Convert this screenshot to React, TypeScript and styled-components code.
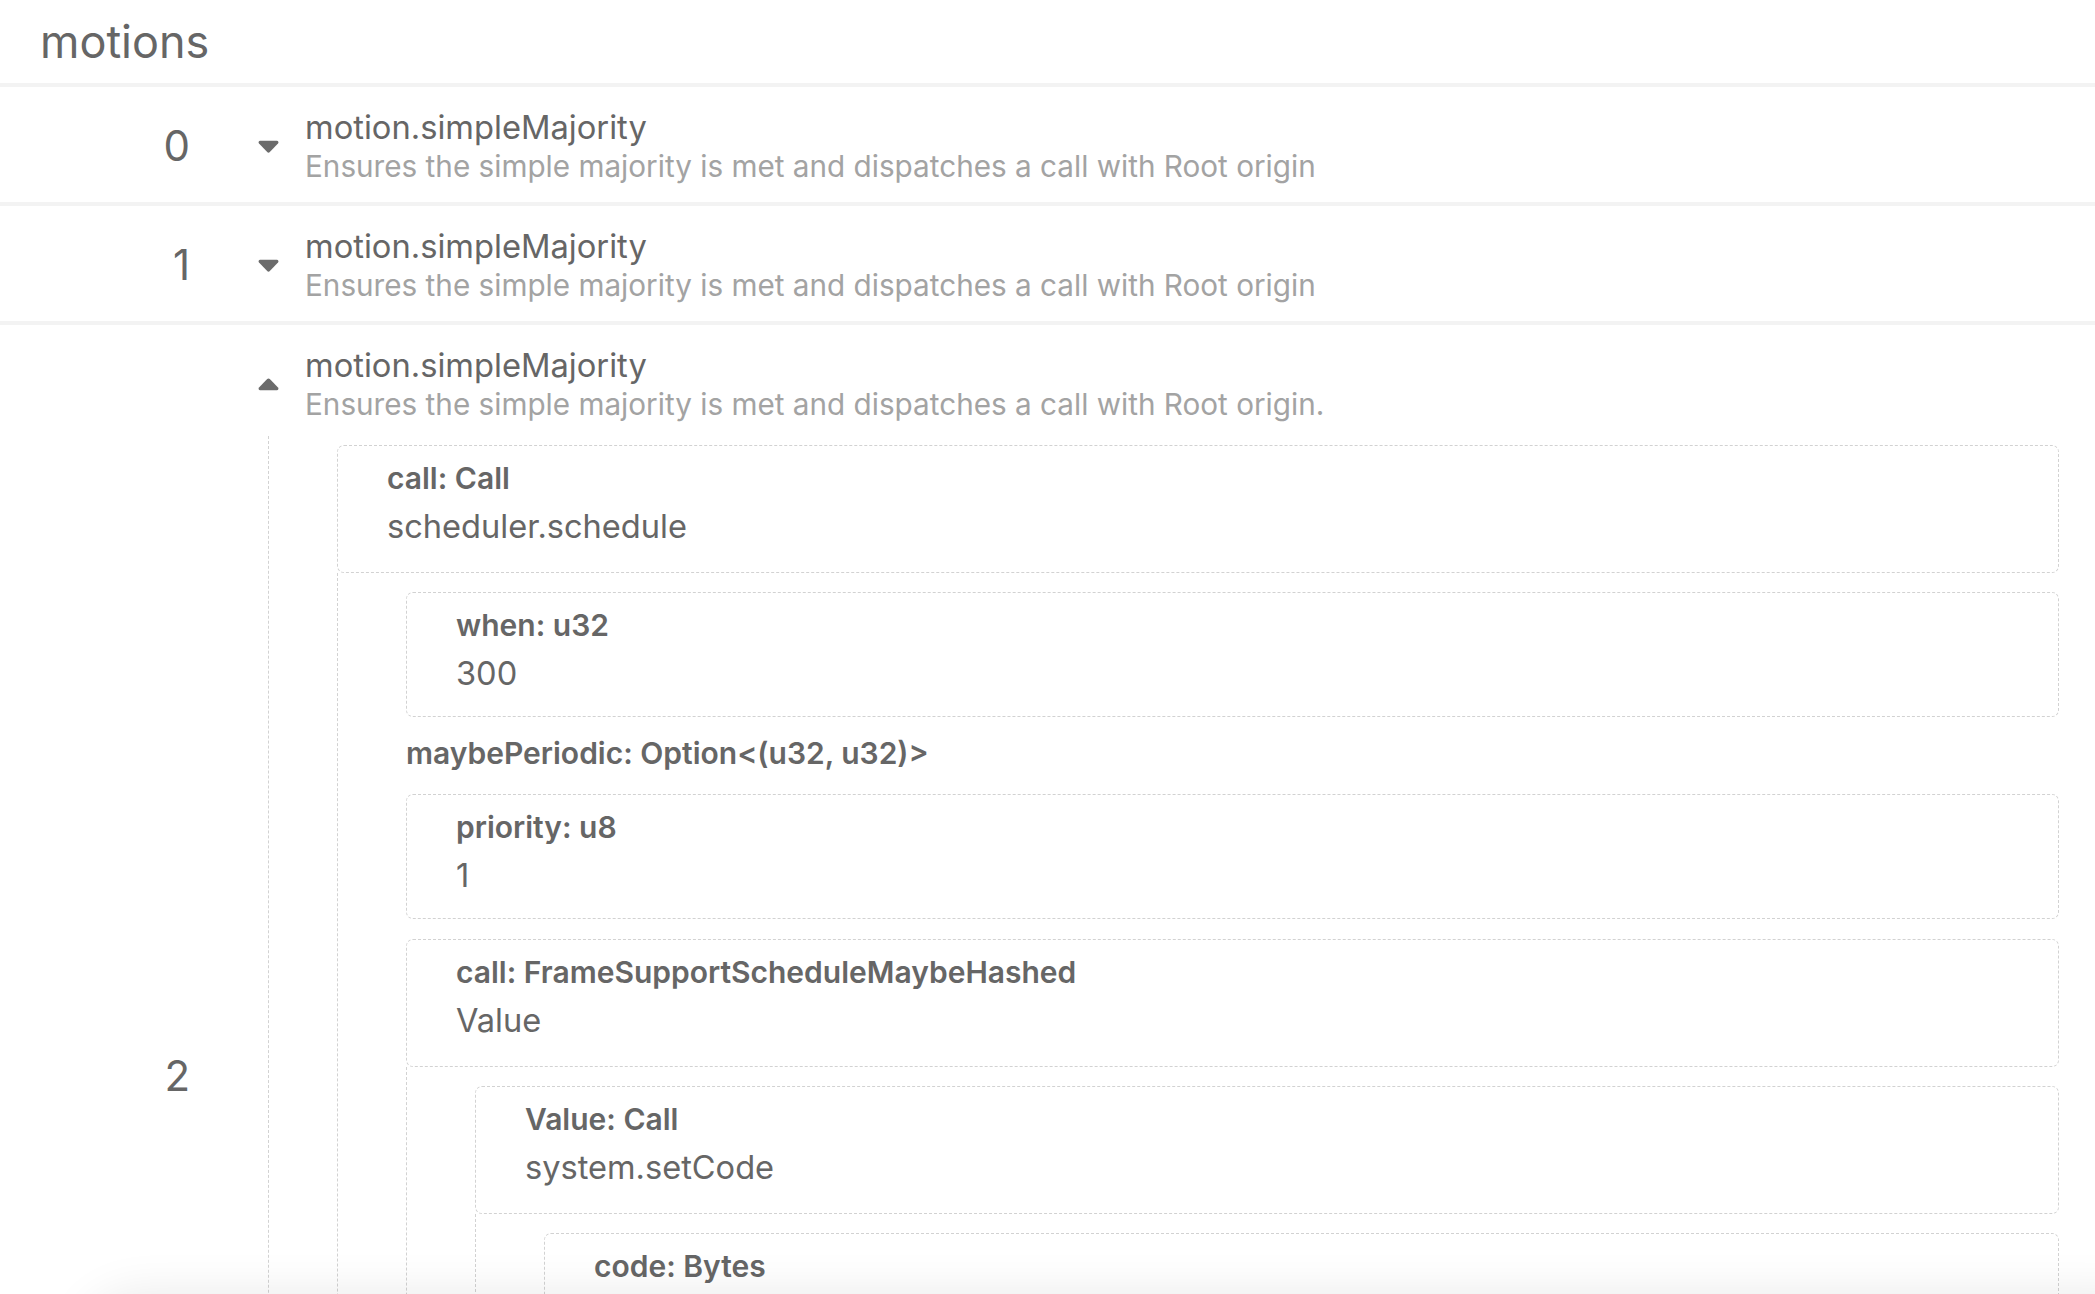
import React from 'react';
import styled, { createGlobalStyle } from 'styled-components';

const GlobalStyle = createGlobalStyle`
  html, body {
    margin: 0;
    padding: 0;
    background: #f3f3f3;
  }
  body {
    font-family: Inter, "Noto Sans", "Liberation Sans", sans-serif;
    color: #666666;
    overflow: hidden;
  }
`;

const Page = styled.div`
  display: flex;
  flex-direction: column;
  gap: 4px;
  min-height: 100vh;
`;

const Header = styled.header`
  height: 83px;
  background: #ffffff;
  display: flex;
  align-items: center;
  padding-left: 40px;
  font-size: 45px;
  font-weight: 400;
  color: #666666;
`;

const Row = styled.section`
  background: #ffffff;
  display: flex;
  align-items: center;
  padding: 20px 36px 17px 0;
`;

const IndexCell = styled.div`
  width: 190px;
  flex: none;
  text-align: right;
  font-size: 42px;
  line-height: 50px;
  color: #666666;
  margin-right: 68px;
`;

const Body = styled.div`
  flex: 1;
  min-width: 0;
  display: flex;
  flex-direction: column;
`;

const CallHeader = styled.div`
  display: flex;
  align-items: center;
  gap: 26px;
`;

const Caret = styled.svg<{ $up?: boolean }>`
  width: 21px;
  height: 13px;
  flex: none;
  fill: #6b6b6b;
  transform: ${(p) => (p.$up ? 'rotate(180deg)' : 'none')};
`;

const Titles = styled.div`
  display: flex;
  flex-direction: column;
`;

const CallName = styled.div`
  font-size: 32.7px;
  line-height: 40px;
  color: #666666;
`;

const CallDesc = styled.div`
  font-size: 29.7px;
  line-height: 38px;
  color: #a3a3a3;
`;

const Tree = styled.div`
  margin: 13px 0 0 10px;
  padding: 9px 0 0 68px;
  border-left: 1px dashed #d2d2d2;
  display: flex;
  flex-direction: column;
  gap: 20px;
`;

const Group = styled.div`
  display: flex;
  flex-direction: column;
`;

const Box = styled.div<{ $parent?: boolean }>`
  border: 1px dashed #d2d2d2;
  border-radius: 7px;
  padding: 13px 20px ${(p) => (p.$parent ? '24px' : '21px')} 49px;
  display: flex;
  flex-direction: column;
`;

const Label = styled.div<{ $bare?: boolean }>`
  font-size: 30px;
  line-height: ${(p) => (p.$bare ? '33px' : '38px')};
  padding-bottom: ${(p) => (p.$bare ? '4px' : '0')};
  font-weight: 600;
  color: #666666;
`;

const Value = styled.div<{ $mono?: boolean }>`
  font-size: 32.6px;
  line-height: 44px;
  margin-top: 7px;
  margin-bottom: ${(p) => (p.$mono ? '9px' : '0')};
  color: #666666;
  word-break: ${(p) => (p.$mono ? 'break-all' : 'normal')};
`;

const Children = styled.div`
  border-left: 1px dashed #d2d2d2;
  padding: 19px 0 0 68px;
  display: flex;
  flex-direction: column;
  gap: 20px;
`;

const BottomShade = styled.div`
  position: fixed;
  left: 80px;
  right: -40px;
  bottom: -70px;
  height: 70px;
  border-radius: 60px 0 0 0;
  box-shadow: 0 0 48px rgba(0, 0, 0, 0.09);
  background: #ffffff;
  pointer-events: none;
`;

type Param =
  | { kind: 'box'; label: string; value: string; mono?: boolean; children?: Param[] }
  | { kind: 'label'; label: string };

function makeHex(len: number): string {
  let s = '0x';
  let x = 0x2f6b1c3d;
  const digits = '0123456789abcdef';
  for (let i = 0; i < len; i++) {
    x = (x * 1103515245 + 12345) & 0x7fffffff;
    s += digits[(x >> 11) & 15];
  }
  return s;
}

const params: Param[] = [
  {
    kind: 'box',
    label: 'call: Call',
    value: 'scheduler.schedule',
    children: [
      { kind: 'box', label: 'when: u32', value: '300' },
      { kind: 'label', label: 'maybePeriodic: Option<(u32, u32)>' },
      { kind: 'box', label: 'priority: u8', value: '1' },
      {
        kind: 'box',
        label: 'call: FrameSupportScheduleMaybeHashed',
        value: 'Value',
        children: [
          {
            kind: 'box',
            label: 'Value: Call',
            value: 'system.setCode',
            children: [{ kind: 'box', label: 'code: Bytes', value: makeHex(830), mono: true }],
          },
        ],
      },
    ],
  },
];

const ParamNode: React.FC<{ p: Param }> = ({ p }) => {
  if (p.kind === 'label') {
    return <Label $bare>{p.label}</Label>;
  }
  return (
    <Group>
      <Box $parent={!!p.children}>
        <Label>{p.label}</Label>
        <Value $mono={p.mono}>{p.value}</Value>
      </Box>
      {p.children && (
        <Children>
          {p.children.map((c, i) => (
            <ParamNode key={i} p={c} />
          ))}
        </Children>
      )}
    </Group>
  );
};

const CaretIcon: React.FC<{ up?: boolean }> = ({ up }) => (
  <Caret viewBox="0 0 21 13" $up={up}>
    <path d="M2.2 0.8 H18.8 C20.3 0.8 21 2.5 20 3.6 L11.8 12.1 C11.1 12.8 9.9 12.8 9.2 12.1 L1 3.6 C0 2.5 0.7 0.8 2.2 0.8 Z" />
  </Caret>
);

const motions = [
  { desc: 'Ensures the simple majority is met and dispatches a call with Root origin', open: false },
  { desc: 'Ensures the simple majority is met and dispatches a call with Root origin', open: false },
  { desc: 'Ensures the simple majority is met and dispatches a call with Root origin.', open: true },
];

export default function App() {
  return (
    <>
      <GlobalStyle />
      <Page>
        <Header>motions</Header>
        {motions.map((m, i) => (
          <Row key={i}>
            <IndexCell>{i}</IndexCell>
            <Body>
              <CallHeader>
                <CaretIcon up={m.open} />
                <Titles>
                  <CallName>motion.simpleMajority</CallName>
                  <CallDesc>{m.desc}</CallDesc>
                </Titles>
              </CallHeader>
              {m.open && (
                <Tree>
                  {params.map((p, j) => (
                    <ParamNode key={j} p={p} />
                  ))}
                </Tree>
              )}
            </Body>
          </Row>
        ))}
      </Page>
      <BottomShade />
    </>
  );
}
